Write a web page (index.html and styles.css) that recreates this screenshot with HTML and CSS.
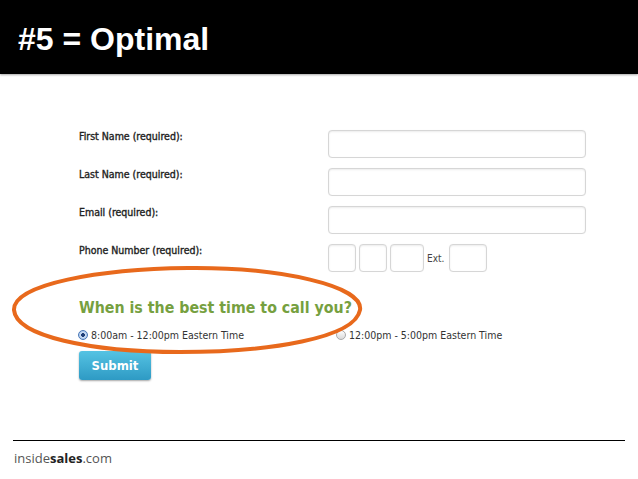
FILE: index.html
```html
<!DOCTYPE html>
<html>
<head>
<meta charset="utf-8">
<link rel="stylesheet" href="styles.css">
</head>
<body>
<header class="top">
  <h1 class="title">#5 = Optimal</h1>
</header>
<main class="content">
  <form class="form">
    <div class="row">
      <label class="label">First Name (required):</label>
      <span class="field wide"></span>
    </div>
    <div class="row">
      <label class="label">Last Name (required):</label>
      <span class="field wide"></span>
    </div>
    <div class="row">
      <label class="label">Email (required):</label>
      <span class="field wide"></span>
    </div>
    <div class="row">
      <label class="label">Phone Number (required):</label>
      <div class="phone">
        <span class="field sq"></span>
        <span class="field sq"></span>
        <span class="field sq3"></span>
        <span class="ext">Ext.</span>
        <span class="field sqx"></span>
      </div>
    </div>
    <h2 class="question">When is the best time to call you?</h2>
    <div class="radios">
      <div class="opt first"><span class="radio on"></span>8:00am - 12:00pm Eastern Time</div>
      <div class="opt"><span class="radio"></span>12:00pm - 5:00pm Eastern Time</div>
    </div>
    <button type="button" class="submit">Submit</button>
  </form>
  <svg class="circle" width="360" height="94" viewBox="0 0 360 94">
    <path d="M178 4 C 270 3, 354 22, 350 46 C 345 74, 260 88, 170 88 C 80 88, 6 72, 4 46 C 3 20, 90 5, 178 4 Z" fill="none" stroke="#e8691c" stroke-width="4"/>
  </svg>
</main>
<footer class="foot">
  <div class="brand">inside<b>sales</b>.com</div>
</footer>
</body>
</html>
```
FILE: styles.css
```css
html, body { margin: 0; padding: 0; background: #fff; }
body { width: 638px; height: 479px; overflow: hidden; font-family: "DejaVu Sans", sans-serif; }
.top {
  height: 74px;
  background: #000;
  box-shadow: 0 1px 2px rgba(0,0,0,0.35);
  display: flex;
  align-items: center;
  padding-left: 18px;
}
.title {
  margin: 0;
  padding-top: 4px;
  color: #fff;
  font-family: "Liberation Sans", Arial, sans-serif;
  font-weight: bold;
  font-size: 32px;
}
.content { position: relative; height: 366px; padding: 56px 0 0 79px; box-sizing: border-box; }
.form { display: flex; flex-direction: column; }
.row { display: grid; grid-template-columns: 249px 258px; height: 28px; margin-bottom: 10px; }
.row:nth-child(4) { margin-bottom: 0; }
.label {
  font-family: "DejaVu Sans Condensed", "DejaVu Sans", sans-serif;
  font-size: 10.5px;
  font-weight: normal;
  color: #222;
  -webkit-text-stroke: 0.35px #222;
}
.field {
  display: block;
  box-sizing: border-box;
  height: 28px;
  border: 1px solid #d6d6d6;
  border-radius: 4px;
  background: #fff;
  box-shadow: inset 0 1px 2px rgba(0,0,0,0.08), 0 0 1px rgba(0,0,0,0.06);
}
.wide { width: 258px; }
.phone { display: flex; align-items: center; gap: 3px; }
.sq { width: 28px; }
.sq3 { width: 34px; }
.sqx { width: 38px; }
.ext { font-family: "DejaVu Sans Condensed", "DejaVu Sans", sans-serif; font-size: 10px; color: #444; width: 19px; }
.question {
  margin: 27px 0 0 0;
  font-family: "DejaVu Sans Condensed", "DejaVu Sans", sans-serif;
  font-size: 15.8px;
  font-weight: bold;
  color: #76a03f;
  line-height: 18px;
}
.radios { display: flex; margin-top: 12px; font-family: "DejaVu Sans Condensed", "DejaVu Sans", sans-serif; font-size: 10.5px; color: #333; line-height: 12px; }
.opt { display: flex; align-items: center; }
.opt.first { width: 258px; margin-left: -1px; }
.radio {
  width: 10px; height: 10px; border-radius: 50%;
  border: 1px solid #a9a9a9; box-sizing: border-box;
  background: linear-gradient(#fdfdfd, #d9d9d9);
  margin-right: 3px;
}
.radio.on { border-color: #4a78b8; background: radial-gradient(circle, #1f3f78 0 1.6px, #cfe0f5 2.2px, #8fb4e3 100%); }
.submit {
  margin-top: 10px;
  width: 72px; height: 29px;
  border: none; border-radius: 3px;
  background: linear-gradient(#55c3e3, #2e9ac4);
  box-shadow: 0 1px 2px rgba(0,0,0,0.35);
  color: #fff;
  font-family: "DejaVu Sans Condensed", "DejaVu Sans", sans-serif;
  font-size: 13px; font-weight: bold;
  padding: 0;
}
.circle { position: absolute; left: 10px; top: 190px; }
.foot { margin: 0 13px; border-top: 1px solid #000; padding: 8px 0 0 1px; }
.brand { font-family: "Open Sans", "DejaVu Sans", sans-serif; font-size: 13px; color: #555; }
.brand b { color: #222; font-weight: 700; }
```
